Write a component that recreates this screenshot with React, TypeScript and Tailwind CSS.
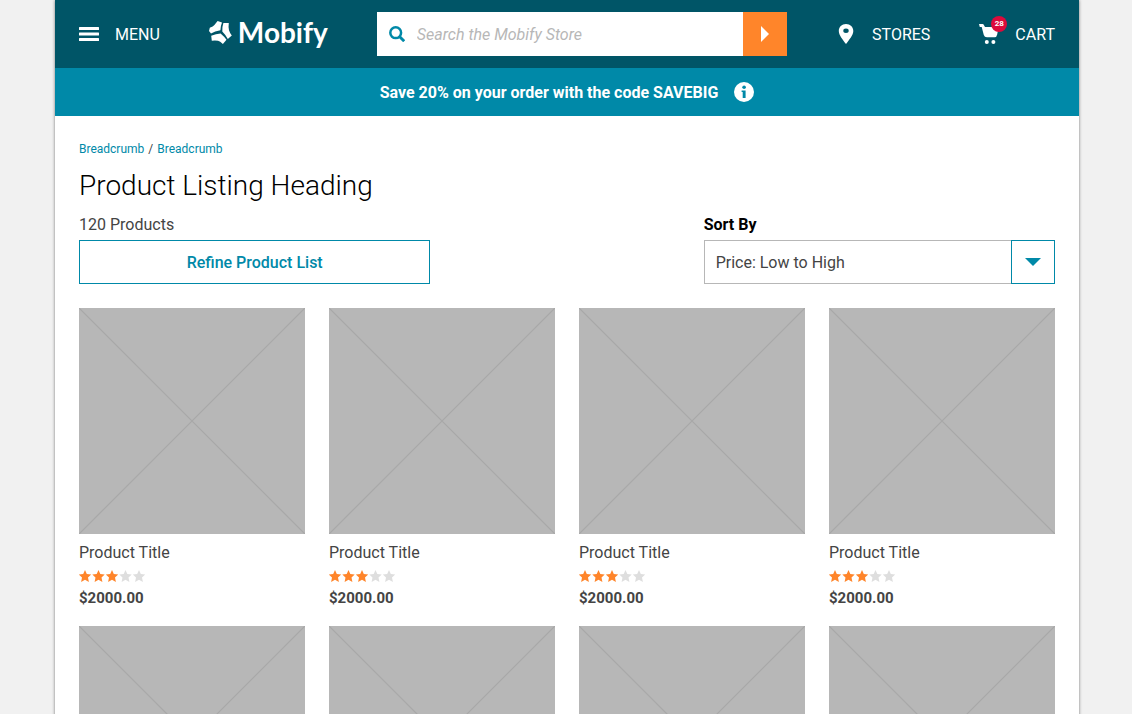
import React from "react";

const products = Array.from({ length: 8 }, (_, id) => ({
  id,
  title: "Product Title",
  rating: 3,
  price: "$2000.00",
}));

const STAR =
  "M6 0 L7.8 4 L12.2 4.5 L9 7.5 L9.9 12 L6 9.8 L2.1 12 L3 7.5 L-0.2 4.5 L4.2 4 Z";

function LogoMark() {
  return (
    <svg viewBox="0 0 23 23" className="h-[23px] w-[23px]" fill="currentColor" aria-hidden="true">
      <path d="M0 10 L0.8 6.8 Q4.2 5.8 5.4 4 L8.6 0 L13 1.5 Q11.7 4.6 11.4 9.3 Q5.8 10.2 2 12.6 Z" />
      <path d="M14.4 1.9 L19.8 1.9 Q19.2 6 20 9.2 Q20.8 12 22.8 14.4 L18.8 18 Q16.6 13.6 13.3 10.4 Q13 6 14.4 1.9 Z" />
      <path d="M2.2 14.8 Q7 12.8 11.6 12.4 Q15 15.2 17.5 18.8 L13.9 22.9 Q11 20.4 9 19.8 Q6.6 19.3 2.8 19.7 Z" />
    </svg>
  );
}

function Placeholder() {
  return (
    <svg
      viewBox="0 0 226 226"
      preserveAspectRatio="none"
      className="block aspect-square w-full bg-[#b7b7b7]"
      aria-hidden="true"
    >
      <path d="M0 0 L226 226 M226 0 L0 226" stroke="#a8a8a8" strokeWidth="1.2" fill="none" />
    </svg>
  );
}

function Rating({ value }: { value: number }) {
  return (
    <svg viewBox="0 0 67 12" className="my-1 block h-3 w-[67px]" role="img" aria-label={`${value} out of 5`}>
      {[0, 1, 2, 3, 4].map((i) => (
        <path key={i} d={STAR} transform={`translate(${i * 13.5} 0)`} fill={i < value ? "#ff852a" : "#dedede"} />
      ))}
    </svg>
  );
}

function Header() {
  return (
    <header className="flex items-center gap-[49px] bg-[#005567] px-6 py-3 text-white">
      <button type="button" className="flex items-center gap-4">
        <svg viewBox="0 0 20 20" className="h-5 w-5" fill="currentColor" aria-hidden="true">
          <rect x="0" y="3" width="20" height="3" rx="0.5" />
          <rect x="0" y="8.5" width="20" height="3" rx="0.5" />
          <rect x="0" y="14" width="20" height="3" rx="0.5" />
        </svg>
        MENU
      </button>
      <a href="#" className="flex items-center gap-1.5 pb-1">
        <LogoMark />
        <span className="font-[Lato] text-[28px] leading-8 font-bold">Mobify</span>
      </a>
      <form className="flex h-11 flex-1" onSubmit={(e) => e.preventDefault()}>
        <label className="flex min-w-0 flex-1 items-center gap-3 bg-white pl-3 text-[#0089a8]">
          <svg viewBox="0 0 16 16" className="h-4 w-4 shrink-0" fill="none" stroke="currentColor" aria-hidden="true">
            <circle cx="6.7" cy="6.7" r="5.4" strokeWidth="2.5" />
            <path d="M10.7 10.7 L15.2 15.2" strokeWidth="2.9" />
          </svg>
          <input
            type="search"
            aria-label="Search"
            placeholder="Search the Mobify Store"
            className="h-full w-full min-w-0 text-base text-[#444] outline-none placeholder:text-[#b7b7b7] placeholder:italic"
          />
        </label>
        <button type="submit" aria-label="Submit search" className="flex w-11 items-center justify-center bg-[#ff852a]">
          <svg viewBox="0 0 8 16" className="h-4 w-2" fill="currentColor" aria-hidden="true">
            <path d="M0 0 L8 8 L0 16 Z" />
          </svg>
        </button>
      </form>
      <a href="#" className="flex items-center gap-4">
        <svg viewBox="0 0 20 20" className="h-5 w-5" fill="currentColor" fillRule="evenodd" aria-hidden="true">
          <path d="M10 0 C5.8 0 2.8 3 2.8 6.9 C2.8 11 6.8 15.6 10 20 C13.2 15.6 17.3 11 17.3 6.9 C17.3 3 14.2 0 10 0 Z M10 4.6 A2.7 2.2 0 1 1 10 9 A2.7 2.2 0 1 1 10 4.6 Z" />
        </svg>
        STORES
      </a>
      <a href="#" className="flex items-center gap-4">
        <span className="relative">
          <svg viewBox="0 0 20 20" className="block h-5 w-5" fill="currentColor" aria-hidden="true">
            <path d="M0 0 H3.6 Q4.5 0 5 1.2 L6 3 H19.5 L18.2 10.5 Q17.7 13.3 15.5 13.3 H8 Q5.5 13.3 4.8 11 L2.7 3 H0.8 Z" />
            <circle cx="7.8" cy="18" r="2" />
            <circle cx="14.4" cy="18" r="2" />
          </svg>
          <span className="absolute -top-2 left-3 flex h-4 w-4 items-center justify-center rounded-full bg-[#dc0a3c] text-[8px] leading-none font-bold">
            28
          </span>
        </span>
        CART
      </a>
    </header>
  );
}

export default function App() {
  return (
    <div className="min-h-screen bg-[#f1f1f1] pl-0.5 font-[Roboto,sans-serif] text-base leading-[25px] text-[#444]">
      <div className="mx-auto min-h-screen max-w-[1024px] bg-white shadow-[0_0_3px_rgba(0,0,0,0.5)]">
        <Header />
        <div className="flex h-12 items-center justify-center gap-4 bg-[#0089a8] font-bold text-white">
          <p>Save 20% on your order with the code SAVEBIG</p>
          <button type="button" aria-label="More information">
            <svg viewBox="0 0 20 20" className="block h-5 w-5" aria-hidden="true">
              <circle cx="10" cy="10" r="10" fill="#fff" />
              <path d="M7.6 8.4 H11.6 V16 H8.7 V10 H7.6 Z" fill="#0089a8" />
              <circle cx="10.1" cy="5.3" r="1.8" fill="#0089a8" />
            </svg>
          </button>
        </div>
        <main className="p-6">
          <nav aria-label="Breadcrumb" className="flex gap-1 text-xs leading-[18px]">
            <a href="#" className="text-[#0089a8]">Breadcrumb</a>
            <span>/</span>
            <a href="#" className="text-[#0089a8]">Breadcrumb</a>
          </nav>
          <h1 className="mt-2 text-[28px] leading-10 font-light text-black">Product Listing Heading</h1>
          <div className="mt-1.5 flex justify-between">
            <div className="w-[36%]">
              <p className="mb-[3px]">120 Products</p>
              <button type="button" className="block h-11 w-full border border-[#0089a8] font-medium text-[#0089a8]">
                Refine Product List
              </button>
            </div>
            <div className="w-[36%]">
              <label htmlFor="sort" className="mb-[3px] block font-bold text-black">
                Sort By
              </label>
              <div className="relative">
                <select id="sort" className="block h-11 w-full appearance-none border border-[#b7b7b7] bg-white pr-12 pl-[11px]">
                  <option>Price: Low to High</option>
                  <option>Price: High to Low</option>
                </select>
                <span className="pointer-events-none absolute inset-y-0 right-0 flex w-11 items-center justify-center border border-[#0089a8] text-[#0089a8]">
                  <svg viewBox="0 0 16 8" className="h-2 w-4" fill="currentColor" aria-hidden="true">
                    <path d="M0 0 H16 L8 8 Z" />
                  </svg>
                </span>
              </div>
            </div>
          </div>
          <ul className="mt-6 grid grid-cols-4 gap-x-6 gap-y-4">
            {products.map((p) => (
              <li key={p.id}>
                <a href="#" className="block">
                  <Placeholder />
                  <h2 className="mt-1.5 leading-[26px]">{p.title}</h2>
                  <Rating value={p.rating} />
                  <p className="text-[15px] leading-6 font-bold">{p.price}</p>
                </a>
              </li>
            ))}
          </ul>
        </main>
      </div>
    </div>
  );
}
